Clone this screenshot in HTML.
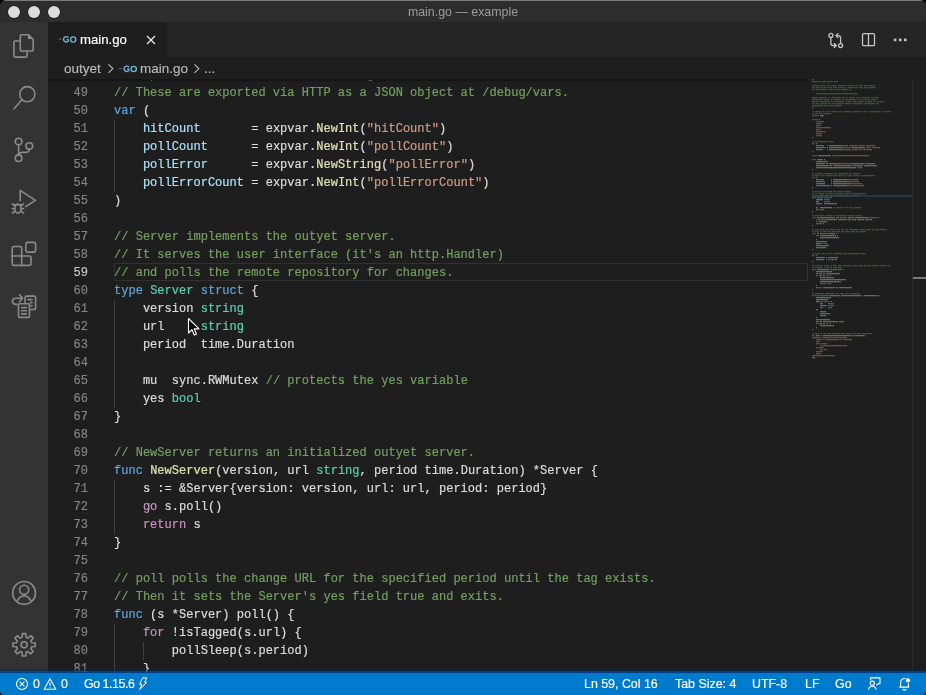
<!DOCTYPE html>
<html><head><meta charset="utf-8">
<style>
*{margin:0;padding:0;box-sizing:border-box}
html,body{width:926px;height:695px;overflow:hidden;background:#1e1e1e}
body{position:relative;font-family:"Liberation Sans",sans-serif}
.abs{position:absolute}
svg{display:block}
#title{left:0;top:0;width:926px;height:22px;background:#2d2d2d;border-top:1px solid #7a7a7a}
#title .t{position:absolute;left:0;top:2.5px;width:926px;text-align:center;font-size:12.4px;color:#9b9b9b;line-height:16px}
.tl{position:absolute;top:5px;width:12px;height:12px;border-radius:50%;background:#dcdcdc;box-shadow:0 0 0 0.6px #1c1c1c}
#act{left:0;top:22px;width:48px;height:650px;background:#333333}
#tabs{left:48px;top:22px;width:878px;height:35px;background:#252526}
#tab{left:48px;top:22px;width:119px;height:35px;background:#1e1e1e}
#bc{left:48px;top:57px;width:878px;height:22px;background:#1e1e1e}
.ln{-webkit-text-stroke:0.2px;letter-spacing:0.02px;position:absolute;left:114px;height:18px;line-height:18px;font-family:"Liberation Mono",monospace;font-size:12px;white-space:pre;color:#d4d4d4}
.num{-webkit-text-stroke:0.15px;position:absolute;left:48px;width:40px;text-align:right;height:18px;line-height:18px;font-family:"Liberation Mono",monospace;font-size:12px;color:#858585}
.num.cur{color:#c6c6c6}
.guide{position:absolute;width:1px;height:18px;background:#404040}
#status{left:0;top:673px;width:926px;height:22px;background:#007acc;color:#fff;font-size:12.4px}
#status span{-webkit-text-stroke:0.15px;position:absolute;top:4px;line-height:15px}
.ui{-webkit-text-stroke:0.15px;position:absolute;font-family:"Liberation Sans",sans-serif;white-space:pre}
</style></head><body><div style="position:absolute;left:0;top:0;width:926px;height:695px;will-change:transform">
<div id="title" class="abs">
  <div class="tl" style="left:8px"></div>
  <div class="tl" style="left:28px"></div>
  <div class="tl" style="left:48px"></div>
  <div class="t">main.go — example</div>
</div>
<div id="act" class="abs"></div>
<div id="tabs" class="abs"></div>
<div id="tab" class="abs"></div>
<div id="bc" class="abs"></div>
<div class="ui" style="left:80px;top:32px;font-size:13.2px;line-height:16px;color:#ffffff">main.go</div>
<div class="ui" style="left:64px;top:61px;font-size:13.5px;line-height:16px;color:#b9b9b9">outyet</div>
<div class="ui" style="left:140px;top:61px;font-size:13.5px;line-height:16px;color:#b9b9b9">main.go</div>
<div class="ui" style="left:204px;top:61px;font-size:13.5px;line-height:16px;color:#b9b9b9">...</div>

<div id="code" class="abs" style="left:0;top:0;width:926px;height:672px;clip-path:inset(79px 0 0 48px)">
  <div class="abs" style="left:114px;top:263px;width:694px;height:18px;border:1px solid #313131"></div>
<div class="ln" style="top:66px"><span style="color:#72a05e;-webkit-text-stroke-color:#72a05e">// Exported variables for monitoring the server.</span></div>
<div class="num" style="top:66px">48</div>
<div class="ln" style="top:84px"><span style="color:#72a05e;-webkit-text-stroke-color:#72a05e">// These are exported via HTTP as a JSON object at /debug/vars.</span></div>
<div class="num" style="top:84px">49</div>
<div class="ln" style="top:102px"><span style="color:#5ea3dc;-webkit-text-stroke-color:#5ea3dc">var</span><span style="color:#dcdcdc;-webkit-text-stroke-color:#dcdcdc"> (</span></div>
<div class="num" style="top:102px">50</div>
<div class="ln" style="top:120px"><span style="color:#dcdcdc;-webkit-text-stroke-color:#dcdcdc">    </span><span style="color:#a6e0fe;-webkit-text-stroke-color:#a6e0fe">hitCount</span><span style="color:#dcdcdc;-webkit-text-stroke-color:#dcdcdc">       = expvar.</span><span style="color:#e0e0b2;-webkit-text-stroke-color:#e0e0b2">NewInt</span><span style="color:#dcdcdc;-webkit-text-stroke-color:#dcdcdc">(</span><span style="color:#d39a82;-webkit-text-stroke-color:#d39a82">&quot;hitCount&quot;</span><span style="color:#dcdcdc;-webkit-text-stroke-color:#dcdcdc">)</span></div>
<div class="num" style="top:120px">51</div>
<div class="guide" style="top:120px;left:114.0px"></div>
<div class="ln" style="top:138px"><span style="color:#dcdcdc;-webkit-text-stroke-color:#dcdcdc">    </span><span style="color:#a6e0fe;-webkit-text-stroke-color:#a6e0fe">pollCount</span><span style="color:#dcdcdc;-webkit-text-stroke-color:#dcdcdc">      = expvar.</span><span style="color:#e0e0b2;-webkit-text-stroke-color:#e0e0b2">NewInt</span><span style="color:#dcdcdc;-webkit-text-stroke-color:#dcdcdc">(</span><span style="color:#d39a82;-webkit-text-stroke-color:#d39a82">&quot;pollCount&quot;</span><span style="color:#dcdcdc;-webkit-text-stroke-color:#dcdcdc">)</span></div>
<div class="num" style="top:138px">52</div>
<div class="guide" style="top:138px;left:114.0px"></div>
<div class="ln" style="top:156px"><span style="color:#dcdcdc;-webkit-text-stroke-color:#dcdcdc">    </span><span style="color:#a6e0fe;-webkit-text-stroke-color:#a6e0fe">pollError</span><span style="color:#dcdcdc;-webkit-text-stroke-color:#dcdcdc">      = expvar.</span><span style="color:#e0e0b2;-webkit-text-stroke-color:#e0e0b2">NewString</span><span style="color:#dcdcdc;-webkit-text-stroke-color:#dcdcdc">(</span><span style="color:#d39a82;-webkit-text-stroke-color:#d39a82">&quot;pollError&quot;</span><span style="color:#dcdcdc;-webkit-text-stroke-color:#dcdcdc">)</span></div>
<div class="num" style="top:156px">53</div>
<div class="guide" style="top:156px;left:114.0px"></div>
<div class="ln" style="top:174px"><span style="color:#dcdcdc;-webkit-text-stroke-color:#dcdcdc">    </span><span style="color:#a6e0fe;-webkit-text-stroke-color:#a6e0fe">pollErrorCount</span><span style="color:#dcdcdc;-webkit-text-stroke-color:#dcdcdc"> = expvar.</span><span style="color:#e0e0b2;-webkit-text-stroke-color:#e0e0b2">NewInt</span><span style="color:#dcdcdc;-webkit-text-stroke-color:#dcdcdc">(</span><span style="color:#d39a82;-webkit-text-stroke-color:#d39a82">&quot;pollErrorCount&quot;</span><span style="color:#dcdcdc;-webkit-text-stroke-color:#dcdcdc">)</span></div>
<div class="num" style="top:174px">54</div>
<div class="guide" style="top:174px;left:114.0px"></div>
<div class="ln" style="top:192px"><span style="color:#dcdcdc;-webkit-text-stroke-color:#dcdcdc">)</span></div>
<div class="num" style="top:192px">55</div>
<div class="ln" style="top:210px"></div>
<div class="num" style="top:210px">56</div>
<div class="ln" style="top:228px"><span style="color:#72a05e;-webkit-text-stroke-color:#72a05e">// Server implements the outyet server.</span></div>
<div class="num" style="top:228px">57</div>
<div class="ln" style="top:246px"><span style="color:#72a05e;-webkit-text-stroke-color:#72a05e">// It serves the user interface (it&#x27;s an http.Handler)</span></div>
<div class="num" style="top:246px">58</div>
<div class="ln" style="top:264px"><span style="color:#72a05e;-webkit-text-stroke-color:#72a05e">// and polls the remote repository for changes.</span></div>
<div class="num cur" style="top:264px">59</div>
<div class="ln" style="top:282px"><span style="color:#5ea3dc;-webkit-text-stroke-color:#5ea3dc">type</span><span style="color:#dcdcdc;-webkit-text-stroke-color:#dcdcdc"> </span><span style="color:#58cfb6;-webkit-text-stroke-color:#58cfb6">Server</span><span style="color:#dcdcdc;-webkit-text-stroke-color:#dcdcdc"> </span><span style="color:#5ea3dc;-webkit-text-stroke-color:#5ea3dc">struct</span><span style="color:#dcdcdc;-webkit-text-stroke-color:#dcdcdc"> {</span></div>
<div class="num" style="top:282px">60</div>
<div class="ln" style="top:300px"><span style="color:#dcdcdc;-webkit-text-stroke-color:#dcdcdc">    version </span><span style="color:#58cfb6;-webkit-text-stroke-color:#58cfb6">string</span></div>
<div class="num" style="top:300px">61</div>
<div class="guide" style="top:300px;left:114.0px"></div>
<div class="ln" style="top:318px"><span style="color:#dcdcdc;-webkit-text-stroke-color:#dcdcdc">    url     </span><span style="color:#58cfb6;-webkit-text-stroke-color:#58cfb6">string</span></div>
<div class="num" style="top:318px">62</div>
<div class="guide" style="top:318px;left:114.0px"></div>
<div class="ln" style="top:336px"><span style="color:#dcdcdc;-webkit-text-stroke-color:#dcdcdc">    period  time.Duration</span></div>
<div class="num" style="top:336px">63</div>
<div class="guide" style="top:336px;left:114.0px"></div>
<div class="ln" style="top:354px"></div>
<div class="num" style="top:354px">64</div>
<div class="guide" style="top:354px;left:114.0px"></div>
<div class="ln" style="top:372px"><span style="color:#dcdcdc;-webkit-text-stroke-color:#dcdcdc">    mu  sync.RWMutex </span><span style="color:#72a05e;-webkit-text-stroke-color:#72a05e">// protects the yes variable</span></div>
<div class="num" style="top:372px">65</div>
<div class="guide" style="top:372px;left:114.0px"></div>
<div class="ln" style="top:390px"><span style="color:#dcdcdc;-webkit-text-stroke-color:#dcdcdc">    yes </span><span style="color:#58cfb6;-webkit-text-stroke-color:#58cfb6">bool</span></div>
<div class="num" style="top:390px">66</div>
<div class="guide" style="top:390px;left:114.0px"></div>
<div class="ln" style="top:408px"><span style="color:#dcdcdc;-webkit-text-stroke-color:#dcdcdc">}</span></div>
<div class="num" style="top:408px">67</div>
<div class="ln" style="top:426px"></div>
<div class="num" style="top:426px">68</div>
<div class="ln" style="top:444px"><span style="color:#72a05e;-webkit-text-stroke-color:#72a05e">// NewServer returns an initialized outyet server.</span></div>
<div class="num" style="top:444px">69</div>
<div class="ln" style="top:462px"><span style="color:#5ea3dc;-webkit-text-stroke-color:#5ea3dc">func</span><span style="color:#dcdcdc;-webkit-text-stroke-color:#dcdcdc"> </span><span style="color:#e0e0b2;-webkit-text-stroke-color:#e0e0b2">NewServer</span><span style="color:#dcdcdc;-webkit-text-stroke-color:#dcdcdc">(version, url </span><span style="color:#58cfb6;-webkit-text-stroke-color:#58cfb6">string</span><span style="color:#dcdcdc;-webkit-text-stroke-color:#dcdcdc">, period time.Duration) *Server {</span></div>
<div class="num" style="top:462px">70</div>
<div class="ln" style="top:480px"><span style="color:#dcdcdc;-webkit-text-stroke-color:#dcdcdc">    s := &amp;Server{version: version, url: url, period: period}</span></div>
<div class="num" style="top:480px">71</div>
<div class="guide" style="top:480px;left:114.0px"></div>
<div class="ln" style="top:498px"><span style="color:#dcdcdc;-webkit-text-stroke-color:#dcdcdc">    </span><span style="color:#cc90c6;-webkit-text-stroke-color:#cc90c6">go</span><span style="color:#dcdcdc;-webkit-text-stroke-color:#dcdcdc"> s.poll()</span></div>
<div class="num" style="top:498px">72</div>
<div class="guide" style="top:498px;left:114.0px"></div>
<div class="ln" style="top:516px"><span style="color:#dcdcdc;-webkit-text-stroke-color:#dcdcdc">    </span><span style="color:#cc90c6;-webkit-text-stroke-color:#cc90c6">return</span><span style="color:#dcdcdc;-webkit-text-stroke-color:#dcdcdc"> s</span></div>
<div class="num" style="top:516px">73</div>
<div class="guide" style="top:516px;left:114.0px"></div>
<div class="ln" style="top:534px"><span style="color:#dcdcdc;-webkit-text-stroke-color:#dcdcdc">}</span></div>
<div class="num" style="top:534px">74</div>
<div class="ln" style="top:552px"></div>
<div class="num" style="top:552px">75</div>
<div class="ln" style="top:570px"><span style="color:#72a05e;-webkit-text-stroke-color:#72a05e">// poll polls the change URL for the specified period until the tag exists.</span></div>
<div class="num" style="top:570px">76</div>
<div class="ln" style="top:588px"><span style="color:#72a05e;-webkit-text-stroke-color:#72a05e">// Then it sets the Server&#x27;s yes field true and exits.</span></div>
<div class="num" style="top:588px">77</div>
<div class="ln" style="top:606px"><span style="color:#5ea3dc;-webkit-text-stroke-color:#5ea3dc">func</span><span style="color:#dcdcdc;-webkit-text-stroke-color:#dcdcdc"> (s *Server) poll() {</span></div>
<div class="num" style="top:606px">78</div>
<div class="ln" style="top:624px"><span style="color:#dcdcdc;-webkit-text-stroke-color:#dcdcdc">    </span><span style="color:#cc90c6;-webkit-text-stroke-color:#cc90c6">for</span><span style="color:#dcdcdc;-webkit-text-stroke-color:#dcdcdc"> !isTagged(s.url) {</span></div>
<div class="num" style="top:624px">79</div>
<div class="guide" style="top:624px;left:114.0px"></div>
<div class="ln" style="top:642px"><span style="color:#dcdcdc;-webkit-text-stroke-color:#dcdcdc">        pollSleep(s.period)</span></div>
<div class="num" style="top:642px">80</div>
<div class="guide" style="top:642px;left:114.0px"></div>
<div class="guide" style="top:642px;left:142.9px"></div>
<div class="ln" style="top:660px"><span style="color:#dcdcdc;-webkit-text-stroke-color:#dcdcdc">    }</span></div>
<div class="num" style="top:660px">81</div>
<div class="guide" style="top:660px;left:114.0px"></div>
  <svg class="abs" style="left:0;top:0" width="926" height="672" opacity="0.38">
<rect x="812" y="79" width="2" height="1.3" fill="#72a05e"/>
<rect x="812" y="81" width="9" height="1.3" fill="#72a05e"/>
<rect x="822" y="81" width="4" height="1.3" fill="#72a05e"/>
<rect x="827" y="81" width="6" height="1.3" fill="#72a05e"/>
<rect x="834" y="81" width="4" height="1.3" fill="#72a05e"/>
<rect x="812" y="85" width="8" height="1.3" fill="#72a05e"/>
<rect x="821" y="85" width="5" height="1.3" fill="#72a05e"/>
<rect x="827" y="85" width="3" height="1.3" fill="#72a05e"/>
<rect x="831" y="85" width="6" height="1.3" fill="#72a05e"/>
<rect x="838" y="85" width="8" height="1.3" fill="#72a05e"/>
<rect x="847" y="85" width="7" height="1.3" fill="#72a05e"/>
<rect x="855" y="85" width="3" height="1.3" fill="#72a05e"/>
<rect x="859" y="85" width="4" height="1.3" fill="#72a05e"/>
<rect x="864" y="85" width="11" height="1.3" fill="#72a05e"/>
<rect x="812" y="87" width="3" height="1.3" fill="#72a05e"/>
<rect x="816" y="87" width="3" height="1.3" fill="#72a05e"/>
<rect x="820" y="87" width="3" height="1.3" fill="#72a05e"/>
<rect x="824" y="87" width="3" height="1.3" fill="#72a05e"/>
<rect x="828" y="87" width="4" height="1.3" fill="#72a05e"/>
<rect x="833" y="87" width="4" height="1.3" fill="#72a05e"/>
<rect x="838" y="87" width="6" height="1.3" fill="#72a05e"/>
<rect x="845" y="87" width="2" height="1.3" fill="#72a05e"/>
<rect x="848" y="87" width="10" height="1.3" fill="#72a05e"/>
<rect x="859" y="87" width="4" height="1.3" fill="#72a05e"/>
<rect x="864" y="87" width="3" height="1.3" fill="#72a05e"/>
<rect x="868" y="87" width="8" height="1.3" fill="#72a05e"/>
<rect x="812" y="89" width="3" height="1.3" fill="#72a05e"/>
<rect x="816" y="89" width="3" height="1.3" fill="#72a05e"/>
<rect x="820" y="89" width="6" height="1.3" fill="#72a05e"/>
<rect x="827" y="89" width="1" height="1.3" fill="#72a05e"/>
<rect x="829" y="89" width="4" height="1.3" fill="#72a05e"/>
<rect x="834" y="89" width="2" height="1.3" fill="#72a05e"/>
<rect x="837" y="89" width="3" height="1.3" fill="#72a05e"/>
<rect x="841" y="89" width="7" height="1.3" fill="#72a05e"/>
<rect x="849" y="89" width="2" height="1.3" fill="#72a05e"/>
<rect x="816" y="93" width="42" height="1.3" fill="#72a05e"/>
<rect x="812" y="97" width="6" height="1.3" fill="#72a05e"/>
<rect x="819" y="97" width="8" height="1.3" fill="#72a05e"/>
<rect x="828" y="97" width="2" height="1.3" fill="#72a05e"/>
<rect x="831" y="97" width="10" height="1.3" fill="#72a05e"/>
<rect x="842" y="97" width="3" height="1.3" fill="#72a05e"/>
<rect x="846" y="97" width="2" height="1.3" fill="#72a05e"/>
<rect x="849" y="97" width="6" height="1.3" fill="#72a05e"/>
<rect x="856" y="97" width="2" height="1.3" fill="#72a05e"/>
<rect x="859" y="97" width="2" height="1.3" fill="#72a05e"/>
<rect x="862" y="97" width="8" height="1.3" fill="#72a05e"/>
<rect x="871" y="97" width="8" height="1.3" fill="#72a05e"/>
<rect x="812" y="99" width="11" height="1.3" fill="#72a05e"/>
<rect x="824" y="99" width="5" height="1.3" fill="#72a05e"/>
<rect x="830" y="99" width="3" height="1.3" fill="#72a05e"/>
<rect x="834" y="99" width="7" height="1.3" fill="#72a05e"/>
<rect x="842" y="99" width="2" height="1.3" fill="#72a05e"/>
<rect x="845" y="99" width="11" height="1.3" fill="#72a05e"/>
<rect x="857" y="99" width="2" height="1.3" fill="#72a05e"/>
<rect x="860" y="99" width="2" height="1.3" fill="#72a05e"/>
<rect x="863" y="99" width="3" height="1.3" fill="#72a05e"/>
<rect x="867" y="99" width="3" height="1.3" fill="#72a05e"/>
<rect x="871" y="99" width="6" height="1.3" fill="#72a05e"/>
<rect x="812" y="101" width="7" height="1.3" fill="#72a05e"/>
<rect x="820" y="101" width="10" height="1.3" fill="#72a05e"/>
<rect x="831" y="101" width="2" height="1.3" fill="#72a05e"/>
<rect x="834" y="101" width="10" height="1.3" fill="#72a05e"/>
<rect x="845" y="101" width="2" height="1.3" fill="#72a05e"/>
<rect x="848" y="101" width="3" height="1.3" fill="#72a05e"/>
<rect x="852" y="101" width="5" height="1.3" fill="#72a05e"/>
<rect x="858" y="101" width="6" height="1.3" fill="#72a05e"/>
<rect x="865" y="101" width="7" height="1.3" fill="#72a05e"/>
<rect x="873" y="101" width="2" height="1.3" fill="#72a05e"/>
<rect x="876" y="101" width="8" height="1.3" fill="#72a05e"/>
<rect x="812" y="103" width="3" height="1.3" fill="#72a05e"/>
<rect x="816" y="103" width="3" height="1.3" fill="#72a05e"/>
<rect x="820" y="103" width="7" height="1.3" fill="#72a05e"/>
<rect x="828" y="103" width="3" height="1.3" fill="#72a05e"/>
<rect x="832" y="103" width="3" height="1.3" fill="#72a05e"/>
<rect x="836" y="103" width="8" height="1.3" fill="#72a05e"/>
<rect x="845" y="103" width="8" height="1.3" fill="#72a05e"/>
<rect x="854" y="103" width="9" height="1.3" fill="#72a05e"/>
<rect x="864" y="103" width="11" height="1.3" fill="#72a05e"/>
<rect x="876" y="103" width="3" height="1.3" fill="#72a05e"/>
<rect x="812" y="105" width="11" height="1.3" fill="#72a05e"/>
<rect x="824" y="105" width="5" height="1.3" fill="#72a05e"/>
<rect x="830" y="105" width="3" height="1.3" fill="#72a05e"/>
<rect x="834" y="105" width="8" height="1.3" fill="#72a05e"/>
<rect x="812" y="107" width="2" height="1.3" fill="#72a05e"/>
<rect x="812" y="111" width="2" height="1.3" fill="#72a05e"/>
<rect x="815" y="111" width="6" height="1.3" fill="#72a05e"/>
<rect x="822" y="111" width="2" height="1.3" fill="#72a05e"/>
<rect x="825" y="111" width="1" height="1.3" fill="#72a05e"/>
<rect x="827" y="111" width="3" height="1.3" fill="#72a05e"/>
<rect x="831" y="111" width="6" height="1.3" fill="#72a05e"/>
<rect x="838" y="111" width="4" height="1.3" fill="#72a05e"/>
<rect x="843" y="111" width="9" height="1.3" fill="#72a05e"/>
<rect x="853" y="111" width="7" height="1.3" fill="#72a05e"/>
<rect x="861" y="111" width="2" height="1.3" fill="#72a05e"/>
<rect x="864" y="111" width="3" height="1.3" fill="#72a05e"/>
<rect x="868" y="111" width="1" height="1.3" fill="#72a05e"/>
<rect x="870" y="111" width="10" height="1.3" fill="#72a05e"/>
<rect x="881" y="111" width="2" height="1.3" fill="#72a05e"/>
<rect x="884" y="111" width="7" height="1.3" fill="#72a05e"/>
<rect x="812" y="113" width="2" height="1.3" fill="#72a05e"/>
<rect x="815" y="113" width="3" height="1.3" fill="#72a05e"/>
<rect x="819" y="113" width="4" height="1.3" fill="#72a05e"/>
<rect x="824" y="113" width="7" height="1.3" fill="#72a05e"/>
<rect x="812" y="115" width="7" height="1.3" fill="#5ea3dc"/>
<rect x="820" y="115" width="4" height="1.3" fill="#dcdcdc"/>
<rect x="812" y="119" width="6" height="1.3" fill="#5ea3dc"/>
<rect x="819" y="119" width="1" height="1.3" fill="#dcdcdc"/>
<rect x="816" y="121" width="8" height="1.3" fill="#d39a82"/>
<rect x="816" y="123" width="6" height="1.3" fill="#d39a82"/>
<rect x="816" y="125" width="5" height="1.3" fill="#d39a82"/>
<rect x="816" y="127" width="15" height="1.3" fill="#d39a82"/>
<rect x="816" y="129" width="5" height="1.3" fill="#d39a82"/>
<rect x="816" y="131" width="10" height="1.3" fill="#d39a82"/>
<rect x="816" y="133" width="6" height="1.3" fill="#d39a82"/>
<rect x="816" y="135" width="6" height="1.3" fill="#d39a82"/>
<rect x="812" y="137" width="1" height="1.3" fill="#dcdcdc"/>
<rect x="812" y="141" width="2" height="1.3" fill="#72a05e"/>
<rect x="815" y="141" width="12" height="1.3" fill="#72a05e"/>
<rect x="828" y="141" width="6" height="1.3" fill="#72a05e"/>
<rect x="812" y="143" width="3" height="1.3" fill="#5ea3dc"/>
<rect x="816" y="143" width="1" height="1.3" fill="#dcdcdc"/>
<rect x="816" y="145" width="8" height="1.3" fill="#a6e0fe"/>
<rect x="827" y="145" width="1" height="1.3" fill="#dcdcdc"/>
<rect x="829" y="145" width="4" height="1.3" fill="#dcdcdc"/>
<rect x="833" y="145" width="1" height="1.3" fill="#dcdcdc"/>
<rect x="834" y="145" width="6" height="1.3" fill="#e0e0b2"/>
<rect x="840" y="145" width="1" height="1.3" fill="#dcdcdc"/>
<rect x="841" y="145" width="6" height="1.3" fill="#d39a82"/>
<rect x="847" y="145" width="1" height="1.3" fill="#dcdcdc"/>
<rect x="849" y="145" width="7" height="1.3" fill="#d39a82"/>
<rect x="856" y="145" width="1" height="1.3" fill="#dcdcdc"/>
<rect x="858" y="145" width="7" height="1.3" fill="#d39a82"/>
<rect x="866" y="145" width="8" height="1.3" fill="#d39a82"/>
<rect x="874" y="145" width="1" height="1.3" fill="#dcdcdc"/>
<rect x="816" y="147" width="10" height="1.3" fill="#a6e0fe"/>
<rect x="827" y="147" width="1" height="1.3" fill="#dcdcdc"/>
<rect x="829" y="147" width="4" height="1.3" fill="#dcdcdc"/>
<rect x="833" y="147" width="1" height="1.3" fill="#dcdcdc"/>
<rect x="834" y="147" width="8" height="1.3" fill="#e0e0b2"/>
<rect x="842" y="147" width="1" height="1.3" fill="#dcdcdc"/>
<rect x="843" y="147" width="6" height="1.3" fill="#d39a82"/>
<rect x="849" y="147" width="1" height="1.3" fill="#dcdcdc"/>
<rect x="851" y="147" width="1" height="1.3" fill="#b5cea8"/>
<rect x="852" y="147" width="1" height="1.3" fill="#dcdcdc"/>
<rect x="853" y="147" width="4" height="1.3" fill="#dcdcdc"/>
<rect x="857" y="147" width="1" height="1.3" fill="#dcdcdc"/>
<rect x="858" y="147" width="6" height="1.3" fill="#dcdcdc"/>
<rect x="864" y="147" width="1" height="1.3" fill="#dcdcdc"/>
<rect x="866" y="147" width="5" height="1.3" fill="#d39a82"/>
<rect x="872" y="147" width="7" height="1.3" fill="#d39a82"/>
<rect x="879" y="147" width="1" height="1.3" fill="#dcdcdc"/>
<rect x="816" y="149" width="7" height="1.3" fill="#a6e0fe"/>
<rect x="827" y="149" width="1" height="1.3" fill="#dcdcdc"/>
<rect x="829" y="149" width="4" height="1.3" fill="#dcdcdc"/>
<rect x="833" y="149" width="1" height="1.3" fill="#dcdcdc"/>
<rect x="834" y="149" width="6" height="1.3" fill="#e0e0b2"/>
<rect x="840" y="149" width="1" height="1.3" fill="#dcdcdc"/>
<rect x="841" y="149" width="9" height="1.3" fill="#d39a82"/>
<rect x="850" y="149" width="1" height="1.3" fill="#dcdcdc"/>
<rect x="852" y="149" width="5" height="1.3" fill="#d39a82"/>
<rect x="857" y="149" width="1" height="1.3" fill="#dcdcdc"/>
<rect x="859" y="149" width="3" height="1.3" fill="#d39a82"/>
<rect x="863" y="149" width="8" height="1.3" fill="#d39a82"/>
<rect x="871" y="149" width="1" height="1.3" fill="#dcdcdc"/>
<rect x="812" y="151" width="1" height="1.3" fill="#dcdcdc"/>
<rect x="812" y="155" width="5" height="1.3" fill="#5ea3dc"/>
<rect x="818" y="155" width="13" height="1.3" fill="#dcdcdc"/>
<rect x="832" y="155" width="1" height="1.3" fill="#dcdcdc"/>
<rect x="834" y="155" width="35" height="1.3" fill="#d39a82"/>
<rect x="812" y="159" width="4" height="1.3" fill="#5ea3dc"/>
<rect x="817" y="159" width="4" height="1.3" fill="#e0e0b2"/>
<rect x="821" y="159" width="1" height="1.3" fill="#dcdcdc"/>
<rect x="822" y="159" width="1" height="1.3" fill="#dcdcdc"/>
<rect x="824" y="159" width="1" height="1.3" fill="#dcdcdc"/>
<rect x="816" y="161" width="4" height="1.3" fill="#dcdcdc"/>
<rect x="820" y="161" width="1" height="1.3" fill="#dcdcdc"/>
<rect x="821" y="161" width="5" height="1.3" fill="#e0e0b2"/>
<rect x="826" y="161" width="1" height="1.3" fill="#dcdcdc"/>
<rect x="827" y="161" width="1" height="1.3" fill="#dcdcdc"/>
<rect x="816" y="163" width="9" height="1.3" fill="#dcdcdc"/>
<rect x="826" y="163" width="1" height="1.3" fill="#dcdcdc"/>
<rect x="827" y="163" width="1" height="1.3" fill="#dcdcdc"/>
<rect x="829" y="163" width="3" height="1.3" fill="#dcdcdc"/>
<rect x="832" y="163" width="1" height="1.3" fill="#dcdcdc"/>
<rect x="833" y="163" width="7" height="1.3" fill="#e0e0b2"/>
<rect x="840" y="163" width="1" height="1.3" fill="#dcdcdc"/>
<rect x="841" y="163" width="8" height="1.3" fill="#d39a82"/>
<rect x="849" y="163" width="1" height="1.3" fill="#dcdcdc"/>
<rect x="851" y="163" width="13" height="1.3" fill="#dcdcdc"/>
<rect x="864" y="163" width="1" height="1.3" fill="#dcdcdc"/>
<rect x="866" y="163" width="1" height="1.3" fill="#dcdcdc"/>
<rect x="867" y="163" width="7" height="1.3" fill="#dcdcdc"/>
<rect x="874" y="163" width="1" height="1.3" fill="#dcdcdc"/>
<rect x="816" y="165" width="4" height="1.3" fill="#dcdcdc"/>
<rect x="820" y="165" width="1" height="1.3" fill="#dcdcdc"/>
<rect x="821" y="165" width="6" height="1.3" fill="#e0e0b2"/>
<rect x="827" y="165" width="1" height="1.3" fill="#dcdcdc"/>
<rect x="828" y="165" width="3" height="1.3" fill="#d39a82"/>
<rect x="831" y="165" width="1" height="1.3" fill="#dcdcdc"/>
<rect x="833" y="165" width="9" height="1.3" fill="#e0e0b2"/>
<rect x="842" y="165" width="1" height="1.3" fill="#dcdcdc"/>
<rect x="843" y="165" width="1" height="1.3" fill="#dcdcdc"/>
<rect x="844" y="165" width="7" height="1.3" fill="#dcdcdc"/>
<rect x="851" y="165" width="1" height="1.3" fill="#dcdcdc"/>
<rect x="853" y="165" width="9" height="1.3" fill="#dcdcdc"/>
<rect x="862" y="165" width="1" height="1.3" fill="#dcdcdc"/>
<rect x="864" y="165" width="1" height="1.3" fill="#dcdcdc"/>
<rect x="865" y="165" width="10" height="1.3" fill="#dcdcdc"/>
<rect x="875" y="165" width="1" height="1.3" fill="#dcdcdc"/>
<rect x="876" y="165" width="1" height="1.3" fill="#dcdcdc"/>
<rect x="816" y="167" width="3" height="1.3" fill="#dcdcdc"/>
<rect x="819" y="167" width="1" height="1.3" fill="#dcdcdc"/>
<rect x="820" y="167" width="5" height="1.3" fill="#e0e0b2"/>
<rect x="825" y="167" width="1" height="1.3" fill="#dcdcdc"/>
<rect x="826" y="167" width="4" height="1.3" fill="#dcdcdc"/>
<rect x="830" y="167" width="1" height="1.3" fill="#dcdcdc"/>
<rect x="831" y="167" width="14" height="1.3" fill="#e0e0b2"/>
<rect x="845" y="167" width="1" height="1.3" fill="#dcdcdc"/>
<rect x="846" y="167" width="1" height="1.3" fill="#dcdcdc"/>
<rect x="847" y="167" width="8" height="1.3" fill="#dcdcdc"/>
<rect x="855" y="167" width="1" height="1.3" fill="#dcdcdc"/>
<rect x="857" y="167" width="3" height="1.3" fill="#5ea3dc"/>
<rect x="860" y="167" width="1" height="1.3" fill="#dcdcdc"/>
<rect x="861" y="167" width="1" height="1.3" fill="#dcdcdc"/>
<rect x="812" y="169" width="1" height="1.3" fill="#dcdcdc"/>
<rect x="812" y="173" width="2" height="1.3" fill="#72a05e"/>
<rect x="815" y="173" width="8" height="1.3" fill="#72a05e"/>
<rect x="824" y="173" width="9" height="1.3" fill="#72a05e"/>
<rect x="834" y="173" width="3" height="1.3" fill="#72a05e"/>
<rect x="838" y="173" width="10" height="1.3" fill="#72a05e"/>
<rect x="849" y="173" width="3" height="1.3" fill="#72a05e"/>
<rect x="853" y="173" width="7" height="1.3" fill="#72a05e"/>
<rect x="812" y="175" width="2" height="1.3" fill="#72a05e"/>
<rect x="815" y="175" width="5" height="1.3" fill="#72a05e"/>
<rect x="821" y="175" width="3" height="1.3" fill="#72a05e"/>
<rect x="825" y="175" width="8" height="1.3" fill="#72a05e"/>
<rect x="834" y="175" width="3" height="1.3" fill="#72a05e"/>
<rect x="838" y="175" width="4" height="1.3" fill="#72a05e"/>
<rect x="843" y="175" width="2" height="1.3" fill="#72a05e"/>
<rect x="846" y="175" width="1" height="1.3" fill="#72a05e"/>
<rect x="848" y="175" width="4" height="1.3" fill="#72a05e"/>
<rect x="853" y="175" width="6" height="1.3" fill="#72a05e"/>
<rect x="860" y="175" width="2" height="1.3" fill="#72a05e"/>
<rect x="863" y="175" width="12" height="1.3" fill="#72a05e"/>
<rect x="812" y="177" width="3" height="1.3" fill="#5ea3dc"/>
<rect x="816" y="177" width="1" height="1.3" fill="#dcdcdc"/>
<rect x="816" y="179" width="8" height="1.3" fill="#a6e0fe"/>
<rect x="831" y="179" width="1" height="1.3" fill="#dcdcdc"/>
<rect x="833" y="179" width="6" height="1.3" fill="#dcdcdc"/>
<rect x="839" y="179" width="1" height="1.3" fill="#dcdcdc"/>
<rect x="840" y="179" width="6" height="1.3" fill="#e0e0b2"/>
<rect x="846" y="179" width="1" height="1.3" fill="#dcdcdc"/>
<rect x="847" y="179" width="10" height="1.3" fill="#d39a82"/>
<rect x="857" y="179" width="1" height="1.3" fill="#dcdcdc"/>
<rect x="816" y="181" width="9" height="1.3" fill="#a6e0fe"/>
<rect x="831" y="181" width="1" height="1.3" fill="#dcdcdc"/>
<rect x="833" y="181" width="6" height="1.3" fill="#dcdcdc"/>
<rect x="839" y="181" width="1" height="1.3" fill="#dcdcdc"/>
<rect x="840" y="181" width="6" height="1.3" fill="#e0e0b2"/>
<rect x="846" y="181" width="1" height="1.3" fill="#dcdcdc"/>
<rect x="847" y="181" width="11" height="1.3" fill="#d39a82"/>
<rect x="858" y="181" width="1" height="1.3" fill="#dcdcdc"/>
<rect x="816" y="183" width="9" height="1.3" fill="#a6e0fe"/>
<rect x="831" y="183" width="1" height="1.3" fill="#dcdcdc"/>
<rect x="833" y="183" width="6" height="1.3" fill="#dcdcdc"/>
<rect x="839" y="183" width="1" height="1.3" fill="#dcdcdc"/>
<rect x="840" y="183" width="9" height="1.3" fill="#e0e0b2"/>
<rect x="849" y="183" width="1" height="1.3" fill="#dcdcdc"/>
<rect x="850" y="183" width="11" height="1.3" fill="#d39a82"/>
<rect x="861" y="183" width="1" height="1.3" fill="#dcdcdc"/>
<rect x="816" y="185" width="14" height="1.3" fill="#a6e0fe"/>
<rect x="831" y="185" width="1" height="1.3" fill="#dcdcdc"/>
<rect x="833" y="185" width="6" height="1.3" fill="#dcdcdc"/>
<rect x="839" y="185" width="1" height="1.3" fill="#dcdcdc"/>
<rect x="840" y="185" width="6" height="1.3" fill="#e0e0b2"/>
<rect x="846" y="185" width="1" height="1.3" fill="#dcdcdc"/>
<rect x="847" y="185" width="16" height="1.3" fill="#d39a82"/>
<rect x="863" y="185" width="1" height="1.3" fill="#dcdcdc"/>
<rect x="812" y="187" width="1" height="1.3" fill="#dcdcdc"/>
<rect x="812" y="191" width="2" height="1.3" fill="#72a05e"/>
<rect x="815" y="191" width="6" height="1.3" fill="#72a05e"/>
<rect x="822" y="191" width="10" height="1.3" fill="#72a05e"/>
<rect x="833" y="191" width="3" height="1.3" fill="#72a05e"/>
<rect x="837" y="191" width="6" height="1.3" fill="#72a05e"/>
<rect x="844" y="191" width="7" height="1.3" fill="#72a05e"/>
<rect x="812" y="193" width="2" height="1.3" fill="#72a05e"/>
<rect x="815" y="193" width="2" height="1.3" fill="#72a05e"/>
<rect x="818" y="193" width="6" height="1.3" fill="#72a05e"/>
<rect x="825" y="193" width="3" height="1.3" fill="#72a05e"/>
<rect x="829" y="193" width="4" height="1.3" fill="#72a05e"/>
<rect x="834" y="193" width="9" height="1.3" fill="#72a05e"/>
<rect x="844" y="193" width="5" height="1.3" fill="#72a05e"/>
<rect x="850" y="193" width="2" height="1.3" fill="#72a05e"/>
<rect x="853" y="193" width="13" height="1.3" fill="#72a05e"/>
<rect x="812" y="195" width="2" height="1.3" fill="#72a05e"/>
<rect x="815" y="195" width="3" height="1.3" fill="#72a05e"/>
<rect x="819" y="195" width="5" height="1.3" fill="#72a05e"/>
<rect x="825" y="195" width="3" height="1.3" fill="#72a05e"/>
<rect x="829" y="195" width="6" height="1.3" fill="#72a05e"/>
<rect x="836" y="195" width="10" height="1.3" fill="#72a05e"/>
<rect x="847" y="195" width="3" height="1.3" fill="#72a05e"/>
<rect x="851" y="195" width="8" height="1.3" fill="#72a05e"/>
<rect x="812" y="197" width="4" height="1.3" fill="#5ea3dc"/>
<rect x="817" y="197" width="6" height="1.3" fill="#58cfb6"/>
<rect x="824" y="197" width="6" height="1.3" fill="#5ea3dc"/>
<rect x="831" y="197" width="1" height="1.3" fill="#dcdcdc"/>
<rect x="816" y="199" width="7" height="1.3" fill="#dcdcdc"/>
<rect x="824" y="199" width="6" height="1.3" fill="#58cfb6"/>
<rect x="816" y="201" width="3" height="1.3" fill="#dcdcdc"/>
<rect x="824" y="201" width="6" height="1.3" fill="#58cfb6"/>
<rect x="816" y="203" width="6" height="1.3" fill="#dcdcdc"/>
<rect x="824" y="203" width="4" height="1.3" fill="#dcdcdc"/>
<rect x="828" y="203" width="1" height="1.3" fill="#dcdcdc"/>
<rect x="829" y="203" width="8" height="1.3" fill="#dcdcdc"/>
<rect x="816" y="207" width="2" height="1.3" fill="#dcdcdc"/>
<rect x="820" y="207" width="4" height="1.3" fill="#dcdcdc"/>
<rect x="824" y="207" width="1" height="1.3" fill="#dcdcdc"/>
<rect x="825" y="207" width="7" height="1.3" fill="#dcdcdc"/>
<rect x="833" y="207" width="2" height="1.3" fill="#72a05e"/>
<rect x="836" y="207" width="8" height="1.3" fill="#72a05e"/>
<rect x="845" y="207" width="3" height="1.3" fill="#72a05e"/>
<rect x="849" y="207" width="3" height="1.3" fill="#72a05e"/>
<rect x="853" y="207" width="8" height="1.3" fill="#72a05e"/>
<rect x="816" y="209" width="3" height="1.3" fill="#dcdcdc"/>
<rect x="820" y="209" width="4" height="1.3" fill="#58cfb6"/>
<rect x="812" y="211" width="1" height="1.3" fill="#dcdcdc"/>
<rect x="812" y="215" width="2" height="1.3" fill="#72a05e"/>
<rect x="815" y="215" width="9" height="1.3" fill="#72a05e"/>
<rect x="825" y="215" width="7" height="1.3" fill="#72a05e"/>
<rect x="833" y="215" width="2" height="1.3" fill="#72a05e"/>
<rect x="836" y="215" width="11" height="1.3" fill="#72a05e"/>
<rect x="848" y="215" width="6" height="1.3" fill="#72a05e"/>
<rect x="855" y="215" width="7" height="1.3" fill="#72a05e"/>
<rect x="812" y="217" width="4" height="1.3" fill="#5ea3dc"/>
<rect x="817" y="217" width="9" height="1.3" fill="#e0e0b2"/>
<rect x="826" y="217" width="1" height="1.3" fill="#dcdcdc"/>
<rect x="827" y="217" width="7" height="1.3" fill="#dcdcdc"/>
<rect x="834" y="217" width="1" height="1.3" fill="#dcdcdc"/>
<rect x="836" y="217" width="3" height="1.3" fill="#dcdcdc"/>
<rect x="840" y="217" width="6" height="1.3" fill="#58cfb6"/>
<rect x="846" y="217" width="1" height="1.3" fill="#dcdcdc"/>
<rect x="848" y="217" width="6" height="1.3" fill="#dcdcdc"/>
<rect x="855" y="217" width="4" height="1.3" fill="#dcdcdc"/>
<rect x="859" y="217" width="1" height="1.3" fill="#dcdcdc"/>
<rect x="860" y="217" width="8" height="1.3" fill="#dcdcdc"/>
<rect x="868" y="217" width="1" height="1.3" fill="#dcdcdc"/>
<rect x="870" y="217" width="1" height="1.3" fill="#dcdcdc"/>
<rect x="871" y="217" width="6" height="1.3" fill="#58cfb6"/>
<rect x="878" y="217" width="1" height="1.3" fill="#dcdcdc"/>
<rect x="816" y="219" width="1" height="1.3" fill="#dcdcdc"/>
<rect x="818" y="219" width="1" height="1.3" fill="#dcdcdc"/>
<rect x="819" y="219" width="1" height="1.3" fill="#dcdcdc"/>
<rect x="821" y="219" width="1" height="1.3" fill="#dcdcdc"/>
<rect x="822" y="219" width="6" height="1.3" fill="#58cfb6"/>
<rect x="828" y="219" width="1" height="1.3" fill="#dcdcdc"/>
<rect x="829" y="219" width="7" height="1.3" fill="#dcdcdc"/>
<rect x="836" y="219" width="1" height="1.3" fill="#dcdcdc"/>
<rect x="838" y="219" width="7" height="1.3" fill="#dcdcdc"/>
<rect x="845" y="219" width="1" height="1.3" fill="#dcdcdc"/>
<rect x="847" y="219" width="3" height="1.3" fill="#dcdcdc"/>
<rect x="850" y="219" width="1" height="1.3" fill="#dcdcdc"/>
<rect x="852" y="219" width="3" height="1.3" fill="#dcdcdc"/>
<rect x="855" y="219" width="1" height="1.3" fill="#dcdcdc"/>
<rect x="857" y="219" width="6" height="1.3" fill="#dcdcdc"/>
<rect x="863" y="219" width="1" height="1.3" fill="#dcdcdc"/>
<rect x="865" y="219" width="6" height="1.3" fill="#dcdcdc"/>
<rect x="871" y="219" width="1" height="1.3" fill="#dcdcdc"/>
<rect x="816" y="221" width="2" height="1.3" fill="#cc90c6"/>
<rect x="819" y="221" width="1" height="1.3" fill="#dcdcdc"/>
<rect x="820" y="221" width="1" height="1.3" fill="#dcdcdc"/>
<rect x="821" y="221" width="4" height="1.3" fill="#e0e0b2"/>
<rect x="825" y="221" width="1" height="1.3" fill="#dcdcdc"/>
<rect x="826" y="221" width="1" height="1.3" fill="#dcdcdc"/>
<rect x="816" y="223" width="6" height="1.3" fill="#cc90c6"/>
<rect x="823" y="223" width="1" height="1.3" fill="#dcdcdc"/>
<rect x="812" y="225" width="1" height="1.3" fill="#dcdcdc"/>
<rect x="812" y="229" width="2" height="1.3" fill="#72a05e"/>
<rect x="815" y="229" width="4" height="1.3" fill="#72a05e"/>
<rect x="820" y="229" width="5" height="1.3" fill="#72a05e"/>
<rect x="826" y="229" width="3" height="1.3" fill="#72a05e"/>
<rect x="830" y="229" width="6" height="1.3" fill="#72a05e"/>
<rect x="837" y="229" width="3" height="1.3" fill="#72a05e"/>
<rect x="841" y="229" width="3" height="1.3" fill="#72a05e"/>
<rect x="845" y="229" width="3" height="1.3" fill="#72a05e"/>
<rect x="849" y="229" width="9" height="1.3" fill="#72a05e"/>
<rect x="859" y="229" width="6" height="1.3" fill="#72a05e"/>
<rect x="866" y="229" width="5" height="1.3" fill="#72a05e"/>
<rect x="872" y="229" width="3" height="1.3" fill="#72a05e"/>
<rect x="876" y="229" width="3" height="1.3" fill="#72a05e"/>
<rect x="880" y="229" width="7" height="1.3" fill="#72a05e"/>
<rect x="812" y="231" width="2" height="1.3" fill="#72a05e"/>
<rect x="815" y="231" width="4" height="1.3" fill="#72a05e"/>
<rect x="820" y="231" width="2" height="1.3" fill="#72a05e"/>
<rect x="823" y="231" width="4" height="1.3" fill="#72a05e"/>
<rect x="828" y="231" width="3" height="1.3" fill="#72a05e"/>
<rect x="832" y="231" width="8" height="1.3" fill="#72a05e"/>
<rect x="841" y="231" width="3" height="1.3" fill="#72a05e"/>
<rect x="845" y="231" width="5" height="1.3" fill="#72a05e"/>
<rect x="851" y="231" width="4" height="1.3" fill="#72a05e"/>
<rect x="856" y="231" width="3" height="1.3" fill="#72a05e"/>
<rect x="860" y="231" width="6" height="1.3" fill="#72a05e"/>
<rect x="812" y="233" width="4" height="1.3" fill="#5ea3dc"/>
<rect x="817" y="233" width="1" height="1.3" fill="#dcdcdc"/>
<rect x="818" y="233" width="1" height="1.3" fill="#dcdcdc"/>
<rect x="820" y="233" width="1" height="1.3" fill="#dcdcdc"/>
<rect x="821" y="233" width="6" height="1.3" fill="#58cfb6"/>
<rect x="827" y="233" width="1" height="1.3" fill="#dcdcdc"/>
<rect x="829" y="233" width="4" height="1.3" fill="#e0e0b2"/>
<rect x="833" y="233" width="1" height="1.3" fill="#dcdcdc"/>
<rect x="834" y="233" width="1" height="1.3" fill="#dcdcdc"/>
<rect x="836" y="233" width="1" height="1.3" fill="#dcdcdc"/>
<rect x="816" y="235" width="3" height="1.3" fill="#cc90c6"/>
<rect x="820" y="235" width="1" height="1.3" fill="#dcdcdc"/>
<rect x="821" y="235" width="8" height="1.3" fill="#e0e0b2"/>
<rect x="829" y="235" width="1" height="1.3" fill="#dcdcdc"/>
<rect x="830" y="235" width="1" height="1.3" fill="#dcdcdc"/>
<rect x="831" y="235" width="1" height="1.3" fill="#dcdcdc"/>
<rect x="832" y="235" width="3" height="1.3" fill="#dcdcdc"/>
<rect x="835" y="235" width="1" height="1.3" fill="#dcdcdc"/>
<rect x="837" y="235" width="1" height="1.3" fill="#dcdcdc"/>
<rect x="820" y="237" width="9" height="1.3" fill="#e0e0b2"/>
<rect x="829" y="237" width="1" height="1.3" fill="#dcdcdc"/>
<rect x="830" y="237" width="1" height="1.3" fill="#dcdcdc"/>
<rect x="831" y="237" width="1" height="1.3" fill="#dcdcdc"/>
<rect x="832" y="237" width="6" height="1.3" fill="#dcdcdc"/>
<rect x="838" y="237" width="1" height="1.3" fill="#dcdcdc"/>
<rect x="816" y="239" width="1" height="1.3" fill="#dcdcdc"/>
<rect x="816" y="241" width="1" height="1.3" fill="#dcdcdc"/>
<rect x="817" y="241" width="1" height="1.3" fill="#dcdcdc"/>
<rect x="818" y="241" width="2" height="1.3" fill="#dcdcdc"/>
<rect x="820" y="241" width="1" height="1.3" fill="#dcdcdc"/>
<rect x="821" y="241" width="4" height="1.3" fill="#e0e0b2"/>
<rect x="825" y="241" width="1" height="1.3" fill="#dcdcdc"/>
<rect x="826" y="241" width="1" height="1.3" fill="#dcdcdc"/>
<rect x="816" y="243" width="1" height="1.3" fill="#dcdcdc"/>
<rect x="817" y="243" width="1" height="1.3" fill="#dcdcdc"/>
<rect x="818" y="243" width="3" height="1.3" fill="#dcdcdc"/>
<rect x="822" y="243" width="1" height="1.3" fill="#dcdcdc"/>
<rect x="824" y="243" width="4" height="1.3" fill="#5ea3dc"/>
<rect x="816" y="245" width="1" height="1.3" fill="#dcdcdc"/>
<rect x="817" y="245" width="1" height="1.3" fill="#dcdcdc"/>
<rect x="818" y="245" width="2" height="1.3" fill="#dcdcdc"/>
<rect x="820" y="245" width="1" height="1.3" fill="#dcdcdc"/>
<rect x="821" y="245" width="6" height="1.3" fill="#e0e0b2"/>
<rect x="827" y="245" width="1" height="1.3" fill="#dcdcdc"/>
<rect x="828" y="245" width="1" height="1.3" fill="#dcdcdc"/>
<rect x="816" y="247" width="8" height="1.3" fill="#e0e0b2"/>
<rect x="824" y="247" width="1" height="1.3" fill="#dcdcdc"/>
<rect x="825" y="247" width="1" height="1.3" fill="#dcdcdc"/>
<rect x="812" y="249" width="1" height="1.3" fill="#dcdcdc"/>
<rect x="812" y="253" width="2" height="1.3" fill="#72a05e"/>
<rect x="815" y="253" width="5" height="1.3" fill="#72a05e"/>
<rect x="821" y="253" width="4" height="1.3" fill="#72a05e"/>
<rect x="826" y="253" width="3" height="1.3" fill="#72a05e"/>
<rect x="830" y="253" width="2" height="1.3" fill="#72a05e"/>
<rect x="833" y="253" width="10" height="1.3" fill="#72a05e"/>
<rect x="844" y="253" width="3" height="1.3" fill="#72a05e"/>
<rect x="848" y="253" width="11" height="1.3" fill="#72a05e"/>
<rect x="860" y="253" width="6" height="1.3" fill="#72a05e"/>
<rect x="812" y="255" width="3" height="1.3" fill="#5ea3dc"/>
<rect x="816" y="255" width="1" height="1.3" fill="#dcdcdc"/>
<rect x="816" y="257" width="9" height="1.3" fill="#a6e0fe"/>
<rect x="826" y="257" width="1" height="1.3" fill="#dcdcdc"/>
<rect x="828" y="257" width="4" height="1.3" fill="#dcdcdc"/>
<rect x="832" y="257" width="1" height="1.3" fill="#dcdcdc"/>
<rect x="833" y="257" width="5" height="1.3" fill="#dcdcdc"/>
<rect x="816" y="259" width="8" height="1.3" fill="#a6e0fe"/>
<rect x="826" y="259" width="1" height="1.3" fill="#dcdcdc"/>
<rect x="828" y="259" width="4" height="1.3" fill="#5ea3dc"/>
<rect x="832" y="259" width="1" height="1.3" fill="#dcdcdc"/>
<rect x="833" y="259" width="1" height="1.3" fill="#dcdcdc"/>
<rect x="835" y="259" width="1" height="1.3" fill="#dcdcdc"/>
<rect x="836" y="259" width="1" height="1.3" fill="#dcdcdc"/>
<rect x="812" y="261" width="1" height="1.3" fill="#dcdcdc"/>
<rect x="812" y="265" width="2" height="1.3" fill="#72a05e"/>
<rect x="815" y="265" width="8" height="1.3" fill="#72a05e"/>
<rect x="824" y="265" width="5" height="1.3" fill="#72a05e"/>
<rect x="830" y="265" width="2" height="1.3" fill="#72a05e"/>
<rect x="833" y="265" width="4" height="1.3" fill="#72a05e"/>
<rect x="838" y="265" width="4" height="1.3" fill="#72a05e"/>
<rect x="843" y="265" width="7" height="1.3" fill="#72a05e"/>
<rect x="851" y="265" width="2" height="1.3" fill="#72a05e"/>
<rect x="854" y="265" width="3" height="1.3" fill="#72a05e"/>
<rect x="858" y="265" width="5" height="1.3" fill="#72a05e"/>
<rect x="864" y="265" width="3" height="1.3" fill="#72a05e"/>
<rect x="868" y="265" width="3" height="1.3" fill="#72a05e"/>
<rect x="872" y="265" width="7" height="1.3" fill="#72a05e"/>
<rect x="880" y="265" width="7" height="1.3" fill="#72a05e"/>
<rect x="888" y="265" width="2" height="1.3" fill="#72a05e"/>
<rect x="812" y="267" width="2" height="1.3" fill="#72a05e"/>
<rect x="815" y="267" width="8" height="1.3" fill="#72a05e"/>
<rect x="824" y="267" width="1" height="1.3" fill="#72a05e"/>
<rect x="826" y="267" width="3" height="1.3" fill="#72a05e"/>
<rect x="830" y="267" width="2" height="1.3" fill="#72a05e"/>
<rect x="833" y="267" width="9" height="1.3" fill="#72a05e"/>
<rect x="812" y="269" width="4" height="1.3" fill="#5ea3dc"/>
<rect x="817" y="269" width="8" height="1.3" fill="#e0e0b2"/>
<rect x="825" y="269" width="1" height="1.3" fill="#dcdcdc"/>
<rect x="826" y="269" width="3" height="1.3" fill="#dcdcdc"/>
<rect x="830" y="269" width="6" height="1.3" fill="#58cfb6"/>
<rect x="836" y="269" width="1" height="1.3" fill="#dcdcdc"/>
<rect x="838" y="269" width="4" height="1.3" fill="#58cfb6"/>
<rect x="843" y="269" width="1" height="1.3" fill="#dcdcdc"/>
<rect x="816" y="271" width="9" height="1.3" fill="#dcdcdc"/>
<rect x="825" y="271" width="1" height="1.3" fill="#dcdcdc"/>
<rect x="826" y="271" width="3" height="1.3" fill="#e0e0b2"/>
<rect x="829" y="271" width="1" height="1.3" fill="#dcdcdc"/>
<rect x="830" y="271" width="1" height="1.3" fill="#b5cea8"/>
<rect x="831" y="271" width="1" height="1.3" fill="#dcdcdc"/>
<rect x="816" y="273" width="1" height="1.3" fill="#dcdcdc"/>
<rect x="817" y="273" width="1" height="1.3" fill="#dcdcdc"/>
<rect x="819" y="273" width="3" height="1.3" fill="#dcdcdc"/>
<rect x="823" y="273" width="1" height="1.3" fill="#dcdcdc"/>
<rect x="824" y="273" width="1" height="1.3" fill="#dcdcdc"/>
<rect x="826" y="273" width="4" height="1.3" fill="#dcdcdc"/>
<rect x="830" y="273" width="1" height="1.3" fill="#dcdcdc"/>
<rect x="831" y="273" width="4" height="1.3" fill="#e0e0b2"/>
<rect x="835" y="273" width="1" height="1.3" fill="#dcdcdc"/>
<rect x="836" y="273" width="3" height="1.3" fill="#dcdcdc"/>
<rect x="839" y="273" width="1" height="1.3" fill="#dcdcdc"/>
<rect x="816" y="275" width="2" height="1.3" fill="#cc90c6"/>
<rect x="819" y="275" width="3" height="1.3" fill="#dcdcdc"/>
<rect x="823" y="275" width="1" height="1.3" fill="#dcdcdc"/>
<rect x="824" y="275" width="1" height="1.3" fill="#dcdcdc"/>
<rect x="826" y="275" width="3" height="1.3" fill="#5ea3dc"/>
<rect x="830" y="275" width="1" height="1.3" fill="#dcdcdc"/>
<rect x="820" y="277" width="3" height="1.3" fill="#dcdcdc"/>
<rect x="823" y="277" width="1" height="1.3" fill="#dcdcdc"/>
<rect x="824" y="277" width="5" height="1.3" fill="#e0e0b2"/>
<rect x="829" y="277" width="1" height="1.3" fill="#dcdcdc"/>
<rect x="830" y="277" width="3" height="1.3" fill="#dcdcdc"/>
<rect x="833" y="277" width="1" height="1.3" fill="#dcdcdc"/>
<rect x="820" y="279" width="9" height="1.3" fill="#dcdcdc"/>
<rect x="829" y="279" width="1" height="1.3" fill="#dcdcdc"/>
<rect x="830" y="279" width="3" height="1.3" fill="#e0e0b2"/>
<rect x="833" y="279" width="1" height="1.3" fill="#dcdcdc"/>
<rect x="834" y="279" width="3" height="1.3" fill="#dcdcdc"/>
<rect x="837" y="279" width="1" height="1.3" fill="#dcdcdc"/>
<rect x="838" y="279" width="5" height="1.3" fill="#e0e0b2"/>
<rect x="843" y="279" width="1" height="1.3" fill="#dcdcdc"/>
<rect x="844" y="279" width="1" height="1.3" fill="#dcdcdc"/>
<rect x="845" y="279" width="1" height="1.3" fill="#dcdcdc"/>
<rect x="820" y="281" width="14" height="1.3" fill="#dcdcdc"/>
<rect x="834" y="281" width="1" height="1.3" fill="#dcdcdc"/>
<rect x="835" y="281" width="3" height="1.3" fill="#e0e0b2"/>
<rect x="838" y="281" width="1" height="1.3" fill="#dcdcdc"/>
<rect x="839" y="281" width="1" height="1.3" fill="#b5cea8"/>
<rect x="840" y="281" width="1" height="1.3" fill="#dcdcdc"/>
<rect x="820" y="283" width="6" height="1.3" fill="#cc90c6"/>
<rect x="827" y="283" width="5" height="1.3" fill="#5ea3dc"/>
<rect x="816" y="285" width="1" height="1.3" fill="#dcdcdc"/>
<rect x="816" y="287" width="6" height="1.3" fill="#cc90c6"/>
<rect x="823" y="287" width="1" height="1.3" fill="#dcdcdc"/>
<rect x="824" y="287" width="1" height="1.3" fill="#dcdcdc"/>
<rect x="825" y="287" width="10" height="1.3" fill="#dcdcdc"/>
<rect x="836" y="287" width="1" height="1.3" fill="#dcdcdc"/>
<rect x="837" y="287" width="1" height="1.3" fill="#dcdcdc"/>
<rect x="839" y="287" width="4" height="1.3" fill="#dcdcdc"/>
<rect x="843" y="287" width="1" height="1.3" fill="#dcdcdc"/>
<rect x="844" y="287" width="8" height="1.3" fill="#dcdcdc"/>
<rect x="812" y="289" width="1" height="1.3" fill="#dcdcdc"/>
<rect x="812" y="293" width="2" height="1.3" fill="#72a05e"/>
<rect x="815" y="293" width="9" height="1.3" fill="#72a05e"/>
<rect x="825" y="293" width="10" height="1.3" fill="#72a05e"/>
<rect x="836" y="293" width="3" height="1.3" fill="#72a05e"/>
<rect x="840" y="293" width="4" height="1.3" fill="#72a05e"/>
<rect x="845" y="293" width="4" height="1.3" fill="#72a05e"/>
<rect x="850" y="293" width="10" height="1.3" fill="#72a05e"/>
<rect x="812" y="295" width="4" height="1.3" fill="#5ea3dc"/>
<rect x="817" y="295" width="1" height="1.3" fill="#dcdcdc"/>
<rect x="818" y="295" width="1" height="1.3" fill="#dcdcdc"/>
<rect x="820" y="295" width="1" height="1.3" fill="#dcdcdc"/>
<rect x="821" y="295" width="6" height="1.3" fill="#58cfb6"/>
<rect x="827" y="295" width="1" height="1.3" fill="#dcdcdc"/>
<rect x="829" y="295" width="9" height="1.3" fill="#e0e0b2"/>
<rect x="838" y="295" width="1" height="1.3" fill="#dcdcdc"/>
<rect x="839" y="295" width="1" height="1.3" fill="#dcdcdc"/>
<rect x="841" y="295" width="4" height="1.3" fill="#dcdcdc"/>
<rect x="845" y="295" width="1" height="1.3" fill="#dcdcdc"/>
<rect x="846" y="295" width="14" height="1.3" fill="#dcdcdc"/>
<rect x="860" y="295" width="1" height="1.3" fill="#dcdcdc"/>
<rect x="862" y="295" width="1" height="1.3" fill="#dcdcdc"/>
<rect x="864" y="295" width="1" height="1.3" fill="#dcdcdc"/>
<rect x="865" y="295" width="4" height="1.3" fill="#dcdcdc"/>
<rect x="869" y="295" width="1" height="1.3" fill="#dcdcdc"/>
<rect x="870" y="295" width="7" height="1.3" fill="#dcdcdc"/>
<rect x="877" y="295" width="1" height="1.3" fill="#dcdcdc"/>
<rect x="879" y="295" width="1" height="1.3" fill="#dcdcdc"/>
<rect x="816" y="297" width="8" height="1.3" fill="#dcdcdc"/>
<rect x="824" y="297" width="1" height="1.3" fill="#dcdcdc"/>
<rect x="825" y="297" width="3" height="1.3" fill="#e0e0b2"/>
<rect x="828" y="297" width="1" height="1.3" fill="#dcdcdc"/>
<rect x="829" y="297" width="1" height="1.3" fill="#b5cea8"/>
<rect x="830" y="297" width="1" height="1.3" fill="#dcdcdc"/>
<rect x="816" y="299" width="1" height="1.3" fill="#dcdcdc"/>
<rect x="817" y="299" width="1" height="1.3" fill="#dcdcdc"/>
<rect x="818" y="299" width="2" height="1.3" fill="#dcdcdc"/>
<rect x="820" y="299" width="1" height="1.3" fill="#dcdcdc"/>
<rect x="821" y="299" width="5" height="1.3" fill="#e0e0b2"/>
<rect x="826" y="299" width="1" height="1.3" fill="#dcdcdc"/>
<rect x="827" y="299" width="1" height="1.3" fill="#dcdcdc"/>
<rect x="816" y="301" width="4" height="1.3" fill="#dcdcdc"/>
<rect x="821" y="301" width="1" height="1.3" fill="#dcdcdc"/>
<rect x="822" y="301" width="1" height="1.3" fill="#dcdcdc"/>
<rect x="824" y="301" width="6" height="1.3" fill="#5ea3dc"/>
<rect x="831" y="301" width="1" height="1.3" fill="#dcdcdc"/>
<rect x="820" y="303" width="3" height="1.3" fill="#a6e0fe"/>
<rect x="828" y="303" width="6" height="1.3" fill="#58cfb6"/>
<rect x="820" y="305" width="7" height="1.3" fill="#a6e0fe"/>
<rect x="828" y="305" width="6" height="1.3" fill="#58cfb6"/>
<rect x="820" y="307" width="3" height="1.3" fill="#a6e0fe"/>
<rect x="828" y="307" width="4" height="1.3" fill="#58cfb6"/>
<rect x="816" y="309" width="1" height="1.3" fill="#dcdcdc"/>
<rect x="817" y="309" width="1" height="1.3" fill="#dcdcdc"/>
<rect x="820" y="311" width="1" height="1.3" fill="#dcdcdc"/>
<rect x="821" y="311" width="1" height="1.3" fill="#dcdcdc"/>
<rect x="822" y="311" width="3" height="1.3" fill="#dcdcdc"/>
<rect x="825" y="311" width="1" height="1.3" fill="#dcdcdc"/>
<rect x="820" y="313" width="1" height="1.3" fill="#dcdcdc"/>
<rect x="821" y="313" width="1" height="1.3" fill="#dcdcdc"/>
<rect x="822" y="313" width="7" height="1.3" fill="#dcdcdc"/>
<rect x="829" y="313" width="1" height="1.3" fill="#dcdcdc"/>
<rect x="820" y="315" width="1" height="1.3" fill="#dcdcdc"/>
<rect x="821" y="315" width="1" height="1.3" fill="#dcdcdc"/>
<rect x="822" y="315" width="3" height="1.3" fill="#dcdcdc"/>
<rect x="825" y="315" width="1" height="1.3" fill="#dcdcdc"/>
<rect x="816" y="317" width="1" height="1.3" fill="#dcdcdc"/>
<rect x="816" y="319" width="1" height="1.3" fill="#dcdcdc"/>
<rect x="817" y="319" width="1" height="1.3" fill="#dcdcdc"/>
<rect x="818" y="319" width="2" height="1.3" fill="#dcdcdc"/>
<rect x="820" y="319" width="1" height="1.3" fill="#dcdcdc"/>
<rect x="821" y="319" width="7" height="1.3" fill="#e0e0b2"/>
<rect x="828" y="319" width="1" height="1.3" fill="#dcdcdc"/>
<rect x="829" y="319" width="1" height="1.3" fill="#dcdcdc"/>
<rect x="816" y="321" width="3" height="1.3" fill="#dcdcdc"/>
<rect x="820" y="321" width="1" height="1.3" fill="#dcdcdc"/>
<rect x="821" y="321" width="1" height="1.3" fill="#dcdcdc"/>
<rect x="823" y="321" width="4" height="1.3" fill="#dcdcdc"/>
<rect x="827" y="321" width="1" height="1.3" fill="#dcdcdc"/>
<rect x="828" y="321" width="7" height="1.3" fill="#e0e0b2"/>
<rect x="835" y="321" width="1" height="1.3" fill="#dcdcdc"/>
<rect x="836" y="321" width="1" height="1.3" fill="#dcdcdc"/>
<rect x="837" y="321" width="1" height="1.3" fill="#dcdcdc"/>
<rect x="839" y="321" width="4" height="1.3" fill="#dcdcdc"/>
<rect x="843" y="321" width="1" height="1.3" fill="#dcdcdc"/>
<rect x="816" y="323" width="2" height="1.3" fill="#cc90c6"/>
<rect x="819" y="323" width="3" height="1.3" fill="#dcdcdc"/>
<rect x="823" y="323" width="1" height="1.3" fill="#dcdcdc"/>
<rect x="824" y="323" width="1" height="1.3" fill="#dcdcdc"/>
<rect x="826" y="323" width="3" height="1.3" fill="#5ea3dc"/>
<rect x="830" y="323" width="1" height="1.3" fill="#dcdcdc"/>
<rect x="820" y="325" width="3" height="1.3" fill="#dcdcdc"/>
<rect x="823" y="325" width="1" height="1.3" fill="#dcdcdc"/>
<rect x="824" y="325" width="5" height="1.3" fill="#e0e0b2"/>
<rect x="829" y="325" width="1" height="1.3" fill="#dcdcdc"/>
<rect x="830" y="325" width="3" height="1.3" fill="#dcdcdc"/>
<rect x="833" y="325" width="1" height="1.3" fill="#dcdcdc"/>
<rect x="816" y="327" width="1" height="1.3" fill="#dcdcdc"/>
<rect x="812" y="329" width="1" height="1.3" fill="#dcdcdc"/>
<rect x="812" y="333" width="2" height="1.3" fill="#72a05e"/>
<rect x="815" y="333" width="4" height="1.3" fill="#72a05e"/>
<rect x="820" y="333" width="2" height="1.3" fill="#72a05e"/>
<rect x="823" y="333" width="3" height="1.3" fill="#72a05e"/>
<rect x="827" y="333" width="4" height="1.3" fill="#72a05e"/>
<rect x="832" y="333" width="8" height="1.3" fill="#72a05e"/>
<rect x="841" y="333" width="4" height="1.3" fill="#72a05e"/>
<rect x="846" y="333" width="6" height="1.3" fill="#72a05e"/>
<rect x="853" y="333" width="3" height="1.3" fill="#72a05e"/>
<rect x="857" y="333" width="4" height="1.3" fill="#72a05e"/>
<rect x="862" y="333" width="10" height="1.3" fill="#72a05e"/>
<rect x="812" y="335" width="3" height="1.3" fill="#5ea3dc"/>
<rect x="816" y="335" width="4" height="1.3" fill="#dcdcdc"/>
<rect x="821" y="335" width="1" height="1.3" fill="#dcdcdc"/>
<rect x="823" y="335" width="8" height="1.3" fill="#dcdcdc"/>
<rect x="831" y="335" width="1" height="1.3" fill="#dcdcdc"/>
<rect x="832" y="335" width="4" height="1.3" fill="#e0e0b2"/>
<rect x="836" y="335" width="1" height="1.3" fill="#dcdcdc"/>
<rect x="837" y="335" width="8" height="1.3" fill="#dcdcdc"/>
<rect x="845" y="335" width="1" height="1.3" fill="#dcdcdc"/>
<rect x="846" y="335" width="3" height="1.3" fill="#e0e0b2"/>
<rect x="849" y="335" width="1" height="1.3" fill="#dcdcdc"/>
<rect x="850" y="335" width="6" height="1.3" fill="#d39a82"/>
<rect x="856" y="335" width="1" height="1.3" fill="#dcdcdc"/>
<rect x="857" y="335" width="1" height="1.3" fill="#dcdcdc"/>
<rect x="858" y="335" width="5" height="1.3" fill="#e0e0b2"/>
<rect x="863" y="335" width="1" height="1.3" fill="#dcdcdc"/>
<rect x="864" y="335" width="1" height="1.3" fill="#d39a82"/>
<rect x="812" y="337" width="9" height="1.3" fill="#d39a82"/>
<rect x="822" y="337" width="25" height="1.3" fill="#d39a82"/>
<rect x="816" y="339" width="6" height="1.3" fill="#d39a82"/>
<rect x="823" y="339" width="2" height="1.3" fill="#d39a82"/>
<rect x="826" y="339" width="12" height="1.3" fill="#d39a82"/>
<rect x="839" y="339" width="3" height="1.3" fill="#d39a82"/>
<rect x="843" y="339" width="9" height="1.3" fill="#d39a82"/>
<rect x="816" y="341" width="4" height="1.3" fill="#d39a82"/>
<rect x="816" y="343" width="4" height="1.3" fill="#d39a82"/>
<rect x="821" y="343" width="6" height="1.3" fill="#d39a82"/>
<rect x="820" y="345" width="2" height="1.3" fill="#d39a82"/>
<rect x="823" y="345" width="24" height="1.3" fill="#d39a82"/>
<rect x="816" y="347" width="8" height="1.3" fill="#d39a82"/>
<rect x="820" y="349" width="3" height="1.3" fill="#d39a82"/>
<rect x="824" y="349" width="3" height="1.3" fill="#d39a82"/>
<rect x="816" y="351" width="7" height="1.3" fill="#d39a82"/>
<rect x="816" y="353" width="5" height="1.3" fill="#d39a82"/>
<rect x="812" y="355" width="23" height="1.3" fill="#d39a82"/>
<rect x="812" y="357" width="1" height="1.3" fill="#d39a82"/>
<rect x="813" y="357" width="2" height="1.3" fill="#dcdcdc"/>
  </svg>
  <div class="abs" style="left:812px;top:195px;width:100px;height:2px;background:#264f78;opacity:0.5"></div>
  <div class="abs" style="left:912px;top:79px;width:1px;height:593px;background:#2b2b2b"></div>
  <div class="abs" style="left:913px;top:277px;width:13px;height:2px;background:#7a7a7a"></div>
</div>
<div class="abs" style="left:48px;top:79px;width:760px;height:1px;background:#151515"></div>
<div class="abs" style="left:48px;top:80px;width:760px;height:2px;background:linear-gradient(rgba(0,0,0,0.35),rgba(0,0,0,0))"></div>
<div class="abs" style="left:0;top:669px;width:926px;height:2px;background:rgba(0,40,90,0.45)"></div>
<div class="abs" style="left:0;top:671px;width:926px;height:2px;background:rgba(0,70,160,0.8)"></div>
<div id="status" class="abs">
  <span style="left:33px">0</span>
  <span style="left:61px">0</span>
  <span style="left:84px;letter-spacing:-0.45px">Go 1.15.6</span>
  <span style="left:584px">Ln 59, Col 16</span>
  <span style="left:675px">Tab Size: 4</span>
  <span style="left:752px">UTF-8</span>
  <span style="left:805px">LF</span>
  <span style="left:835px">Go</span>
</div>

<svg class="abs" style="left:0;top:0" width="926" height="695" fill="none">
  <g stroke="#8a8a8a" stroke-width="1.6" stroke-linejoin="round" stroke-linecap="round">
    <!-- files -->
    <path d="M21.5 34.8h7l4.7 4.7v10.3a1.2 1.2 0 0 1-1.2 1.2h-10.5a1.2 1.2 0 0 1-1.2-1.2v-13.8a1.2 1.2 0 0 1 1.2-1.2z"/>
    <path d="M28.5 35v3.5h3.5z" fill="#8a8a8a" stroke-width="1.2"/>
    <path d="M20 41h-4.9a1.2 1.2 0 0 0-1.2 1.2v13.7a1.2 1.2 0 0 0 1.2 1.2h10.8a1.2 1.2 0 0 0 1.2-1.2v-4.9"/>
    <!-- search -->
    <circle cx="27.3" cy="94.2" r="7.6"/>
    <path d="M21.9 99.6l-8 9.3"/>
    <!-- scm -->
    <circle cx="18.6" cy="141.5" r="3.3"/>
    <circle cx="29.3" cy="146.1" r="3.3"/>
    <circle cx="18.6" cy="158.2" r="3.3"/>
    <path d="M18.6 144.8v10.1M29.3 149.4c0 2.2-1.6 3-4.5 3h-1.8c-2.6 0-4.4 1.2-4.4 2.5"/>
    <!-- debug -->
    <path d="M20.2 200.6v-10.2l15.2 9.9-9.7 6.3"/>
    <ellipse cx="17.9" cy="208.6" rx="3.1" ry="4.6"/>
    <path d="M15 204.8h5.8M12.4 204l2.2 1.5M23.4 204l-2.2 1.5M12.2 208.6h2.6M23.6 208.6h-2.6M12.4 213l2.3-1.6M23.4 213l-2.3-1.6"/>
    <!-- extensions -->
    <path d="M13.7 246.5h6.5a1.5 1.5 0 0 1 1.5 1.5v8h7.8a1.5 1.5 0 0 1 1.5 1.5v6.4a1.5 1.5 0 0 1-1.5 1.5h-15.8a1.5 1.5 0 0 1-1.5-1.5v-15.9a1.5 1.5 0 0 1 1.5-1.5z"/>
    <path d="M12.2 256h9.5v9.4"/>
    <rect x="25.9" y="242.4" width="9.7" height="9.7" rx="1.6"/>
    <!-- remote -->
    <path d="M25.1 302.5v-5.2a1.2 1.2 0 0 1 1.2-1.2h8.1a1.2 1.2 0 0 1 1.2 1.2v11a1.2 1.2 0 0 1-1.2 1.2h-4.9"/>
    <rect x="18.5" y="303.7" width="11" height="13.7" rx="1.2"/>
    <path d="M21.6 307.6h4.8M21.6 310.7h4.8M21.6 313.9h4.8M28 299.6h4M30.5 302.6h1.5M31 305.8h1"/>
    <path d="M16.8 304.4c-2.6 0-4.4-1.3-4.4-3.1 0-1.8 1.6-3 3.6-3h6.4M19.5 294.8l3 3.5-3 3.4"/>
    <!-- account -->
    <circle cx="24.1" cy="592.9" r="11.4"/>
    <circle cx="24.1" cy="589.8" r="4.6"/>
    <path d="M16.9 601.5c1.6-3.6 4-5.6 7.2-5.6s5.6 2 7.2 5.6"/>
    <!-- settings -->
    <path d="M22.08 637.27L22.33 633.64L25.87 633.64L26.12 637.27L28.00 638.05L30.74 635.66L33.24 638.16L30.85 640.90L31.63 642.78L35.26 643.03L35.26 646.57L31.63 646.82L30.85 648.70L33.24 651.44L30.74 653.94L28.00 651.55L26.12 652.33L25.87 655.96L22.33 655.96L22.08 652.33L20.20 651.55L17.46 653.94L14.96 651.44L17.35 648.70L16.57 646.82L12.94 646.57L12.94 643.03L16.57 642.78L17.35 640.90L14.96 638.16L17.46 635.66L20.20 638.05Z"/>
    <circle cx="24.1" cy="644.8" r="3"/>
  </g>
  <!-- tab actions -->
  <g stroke="#c5c5c5" stroke-width="1.3" stroke-linecap="round" stroke-linejoin="round">
    <circle cx="830.9" cy="35.4" r="2"/>
    <circle cx="840.6" cy="45.6" r="2"/>
    <path d="M830.9 37.6V43.3a2.2 2.2 0 0 0 2.2 2.2H836.3M834.3 43.5L836.3 45.5L834.3 47.5"/>
    <path d="M840.6 43.6V37.8a2.2 2.2 0 0 0-2.2-2.2H835.9M837.9 33.6L835.9 35.6L837.9 37.6"/>
    <rect x="862.5" y="33.6" width="12" height="12" rx="1.2"/>
    <path d="M868.5 33.6v12"/>
  </g>
  <g fill="#c5c5c5">
    <rect x="893.8" y="38.6" width="2.6" height="2.6"/>
    <rect x="898.9" y="38.6" width="2.6" height="2.6"/>
    <rect x="904" y="38.6" width="2.6" height="2.6"/>
  </g>
  <!-- close x -->
  <path d="M147 36l8 8M155 36l-8 8" stroke="#e8e8e8" stroke-width="1.3"/>
  <!-- breadcrumb chevrons -->
  <path d="M108.5 64.3l4.3 4.3-4.3 4.3M194.5 64.3l4.3 4.3-4.3 4.3" stroke="#b9b9b9" stroke-width="1.1"/>
  <!-- go icons -->
  <g id="goi" stroke="#6fb6dc" stroke-width="1.35">
    <path d="M58.6 39.1h3" stroke-width="0.8" opacity="0.7"/>
    <path d="M68.6 37.9a2.7 2.7 0 1 0 0.1 2.6M68.8 39.7h-2.1"/>
    <circle cx="73.2" cy="39.5" r="2.65"/>
  </g>
  <use href="#goi" x="60.5" y="29.5"/>
  <!-- status icons -->
  <g stroke="#ffffff" stroke-width="1.1" stroke-linejoin="round">
    <circle cx="22" cy="684" r="5.5"/>
    <path d="M19.6 681.6l4.8 4.8M24.4 681.6l-4.8 4.8"/>
    <path d="M50 678.8l5.8 10.4h-11.6z"/>
    <path d="M50 682.5v3.6M50 687.2v.9"/>
    <path d="M142.6 677.9h4.1l-2.1 4.3h2.1l-7 7.5 2.2-5.4h-2.2z" stroke-width="1"/>
    <path d="M870.6 680.2V677.9H880V683.6H878.2L876.4 685.3"/>
    <circle cx="872.3" cy="683.2" r="2.1"/>
    <path d="M868.4 689.6c.6-2.2 2-3.3 3.9-3.3s3.3 1.1 3.9 3.3"/>
    <path d="M900.6 686.9V682.4a3.9 3.9 0 0 1 7.8 0V686.9M899.3 687.1H909.1M902.7 688.9a1.8 1.6 0 0 0 3.5 0"/>
  </g>
  <circle cx="907.9" cy="680.3" r="2.6" fill="#ffffff" stroke="#007acc" stroke-width="1"/>
</svg>
<svg class="abs" style="left:187px;top:317px" width="14" height="20" viewBox="0 0 14 20">
  <path d="M1.5 1.5v14.5l3.5-3.3 2.3 5.3 2.2-1-2.3-5.1h4.8z" fill="#000" stroke="#fff" stroke-width="1.1" stroke-linejoin="round"/>
</svg>
<div class="abs" style="left:0;top:0;width:926px;height:695px;border-radius:6px 6px 4px 4px;box-shadow:0 0 0 6px #000;pointer-events:none"></div>
</div></body></html>
